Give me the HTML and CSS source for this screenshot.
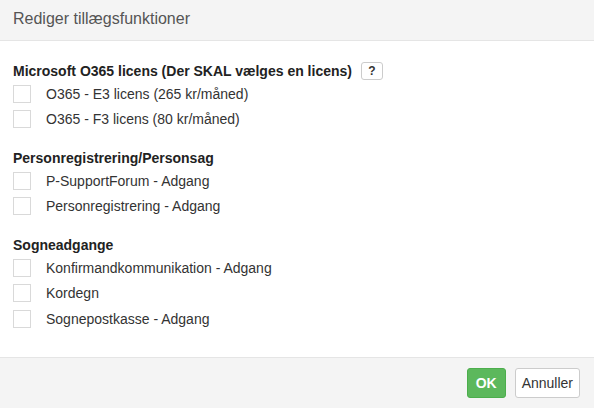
FILE: index.html
```html
<!DOCTYPE html>
<html lang="da">
<head>
<meta charset="utf-8">
<title>Rediger tillægsfunktioner</title>
<link rel="stylesheet" href="styles.css">
</head>
<body>
<div class="modal">
  <div class="modal-header">
    <h4 class="modal-title">Rediger tillægsfunktioner</h4>
  </div>
  <div class="modal-body">
    <div class="group">
      <div class="group-title">Microsoft O365 licens (Der SKAL vælges en licens) <span class="help">?</span></div>
      <label class="row"><span class="box"></span><span class="text">O365 - E3 licens (265 kr/måned)</span></label>
      <label class="row"><span class="box"></span><span class="text">O365 - F3 licens (80 kr/måned)</span></label>
    </div>
    <div class="group">
      <div class="group-title">Personregistrering/Personsag</div>
      <label class="row"><span class="box"></span><span class="text">P-SupportForum - Adgang</span></label>
      <label class="row"><span class="box"></span><span class="text">Personregistrering - Adgang</span></label>
    </div>
    <div class="group">
      <div class="group-title">Sogneadgange</div>
      <label class="row"><span class="box"></span><span class="text">Konfirmandkommunikation - Adgang</span></label>
      <label class="row"><span class="box"></span><span class="text">Kordegn</span></label>
      <label class="row"><span class="box"></span><span class="text">Sognepostkasse - Adgang</span></label>
    </div>
  </div>
  <div class="modal-footer">
    <button class="btn btn-ok">OK</button>
    <button class="btn btn-cancel">Annuller</button>
  </div>
</div>
</body>
</html>
```
FILE: styles.css
```css
html, body {
  margin: 0;
  padding: 0;
  background: #fff;
}
body {
  font-family: "Liberation Sans", Arial, sans-serif;
  color: #333;
  width: 594px;
  height: 408px;
  overflow: hidden;
}
.modal {
  display: flex;
  flex-direction: column;
  height: 408px;
}
.modal-header {
  background: #f4f4f4;
  border-bottom: 1px solid #e5e5e5;
  padding: 10px 13px 11px;
  height: 19px;
}
.modal-title {
  margin: 0;
  font-size: 16px;
  line-height: 18px;
  font-weight: normal;
  color: #555;
}
.modal-body {
  flex: 1;
  padding: 20px 13px 0;
}
.group {
  margin-bottom: 16px;
}
.group-title {
  font-weight: bold;
  font-size: 14px;
  line-height: 20px;
  height: 20px;
  color: #222;
  display: flex;
  align-items: center;
}
.help {
  display: inline-flex;
  align-items: center;
  justify-content: center;
  box-sizing: border-box;
  width: 22px;
  height: 18px;
  margin-left: 9px;
  border: 1px solid #ccc;
  border-radius: 3px;
  font-size: 12px;
  font-weight: bold;
  color: #333;
  background: #fff;
}
.row {
  display: flex;
  align-items: center;
  height: 25.5px;
  font-size: 14px;
  color: #333;
}
.box {
  box-sizing: border-box;
  width: 18px;
  height: 18px;
  border: 1px solid #d9d9d9;
  background: #fff;
  margin-right: 15px;
  flex: none;
}
.modal-footer {
  background: #f4f4f4;
  border-top: 1px solid #e5e5e5;
  padding: 10px 14px 10px;
  display: flex;
  justify-content: flex-end;
  gap: 9px;
}
.btn {
  box-sizing: border-box;
  height: 30px;
  font-family: "Liberation Sans", Arial, sans-serif;
  font-size: 14px;
  border-radius: 3px;
  cursor: pointer;
  margin: 0;
}
.btn-ok {
  background: #5cb85c;
  border: 1px solid #4cae4c;
  color: #fff;
  font-weight: bold;
  padding: 0 8px;
}
.btn-cancel {
  background: #fff;
  border: 1px solid #ccc;
  color: #333;
  padding: 0 6px;
}
```
